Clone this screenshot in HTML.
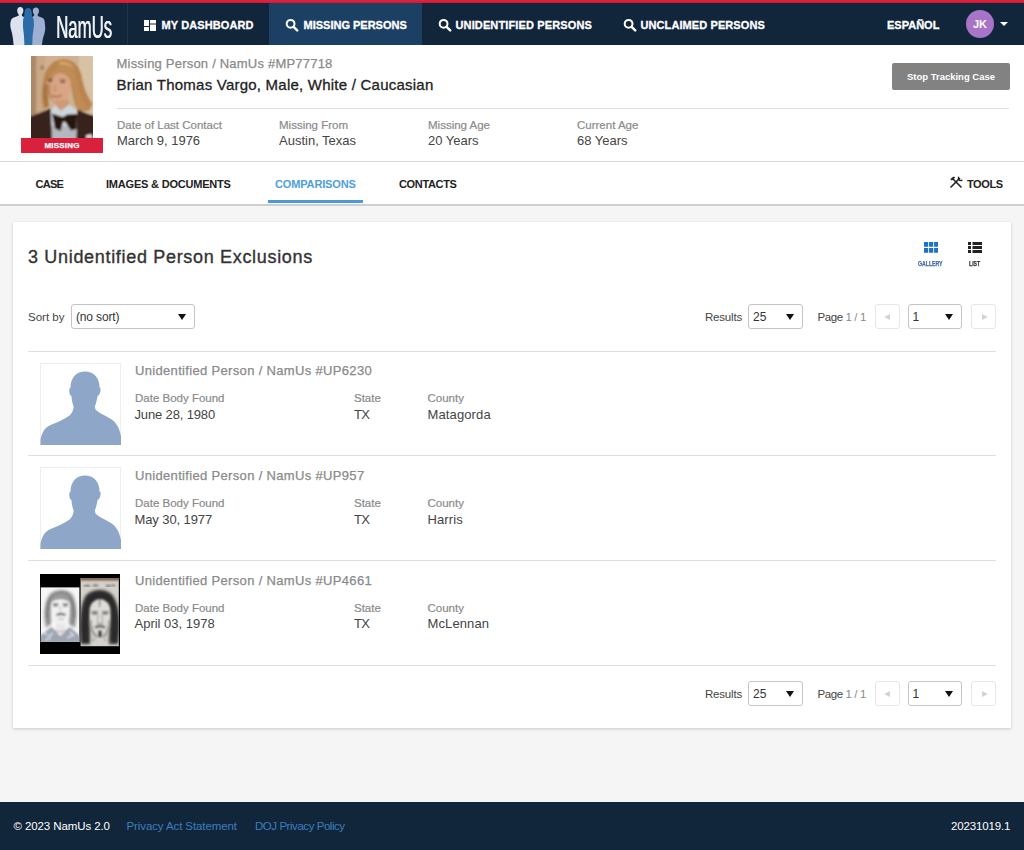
<!DOCTYPE html>
<html lang="en">
<head>
<meta charset="utf-8">
<title>NamUs - Comparisons</title>
<style>
*{box-sizing:border-box;margin:0;padding:0}
html,body{width:1024px;height:850px;overflow:hidden}
body{background:#f5f5f5;font-family:"Liberation Sans","DejaVu Sans",sans-serif;color:#333;position:relative}
.abs{position:absolute;white-space:nowrap}
#redbar{position:absolute;left:0;top:0;width:1024px;height:3px;background:#e01f3d}
#nav{position:absolute;left:0;top:3px;width:1024px;height:42px;background:#11253b;box-shadow:0 0 1px rgba(10,25,45,.6)}
#nav .sep{position:absolute;left:127px;top:0;width:1px;height:42px;background:#22344d}
#nav .active{position:absolute;left:269px;top:0;width:153px;height:42px;background:#1c3f64}
.navt{position:absolute;top:15px;font-weight:bold;font-size:11px;-webkit-text-stroke:.3px #fff;color:#fff;white-space:nowrap;line-height:14px}
#hdr{position:absolute;left:0;top:45px;width:1024px;height:117px;background:#fff;border-bottom:1px solid #d9d9d9}
#tabs{position:absolute;left:0;top:162px;width:1024px;height:44px;background:#fff;border-bottom:2px solid #cfcfcf}
.tab{position:absolute;top:15px;font-weight:bold;font-size:11px;color:#222;white-space:nowrap;line-height:14px}
#card{position:absolute;left:13px;top:222px;width:998px;height:506px;background:#fff;box-shadow:0 1px 3px rgba(0,0,0,.18)}
#footer{position:absolute;left:0;top:802px;width:1024px;height:48px;background:#11253b}
.lbl{position:absolute;font-size:11.5px;color:#8a8a8a;-webkit-text-stroke:.2px #8a8a8a;white-space:nowrap;line-height:14px}
.val{position:absolute;font-size:13px;color:#444;white-space:nowrap;line-height:16px}
.hr{position:absolute;height:1px;background:#dedede}
.sel{position:absolute;height:25px;border:1px solid #c4c4c4;border-radius:3px;background:#fff;font-size:12px;color:#333;line-height:25px;padding-left:4px;white-space:nowrap}
.sel i{position:absolute;right:8px;top:9px;width:0;height:0;border-left:4px solid transparent;border-right:4px solid transparent;border-top:6px solid #111}
.pbtn{position:absolute;width:25px;height:25px;border:1px solid #e6e6e6;border-radius:3px;background:#fff}
.pbtn i{position:absolute;top:9px;width:0;height:0;border-top:3px solid transparent;border-bottom:3px solid transparent}
.pbtn i.l{left:8px;border-right:6px solid #d4d4d4}
.pbtn i.r{left:10px;border-left:6px solid #d4d4d4}
.ttl{position:absolute;font-size:13px;color:#8a8a8a;-webkit-text-stroke:.25px #8a8a8a;white-space:nowrap;line-height:16px;left:122px;letter-spacing:.33px}
.thumb{position:absolute;overflow:hidden}
.small{position:absolute;font-size:11.5px;color:#444;line-height:14px;white-space:nowrap}
.ft{position:absolute;top:17px;font-size:11.5px;line-height:14px;white-space:nowrap}
</style>
</head>
<body>
<div id="redbar"></div>
<div id="nav">
  <div class="sep"></div>
  <div class="active"></div>
  <svg class="abs" style="left:0;top:-3px" width="56" height="48" viewBox="0 0 56 48">
    <path d="M20.3 6.9C22.3 6.9 23.5 8.5 23.4 10.6C23.3 12.6 22.6 13.8 21.9 14.6L22 16L25 17.5V45H13.6L13 39L12 33L10.6 28L10.2 24L11 20L12.6 18L16.5 16.5L18.6 15.8L18.7 14.6C17.9 13.8 17.3 12.6 17.2 10.6C17.1 8.5 18.3 6.9 20.3 6.9Z" fill="#dde3ee"/>
    <path d="M35.9 7.5C37.9 7.5 39.1 9 39 11C38.9 12.8 38.3 13.8 37.6 14.5L37.8 16L41 17.2L43.6 18.6L44.6 21L45.3 28.5L44.6 33L43.2 37.5L42.4 41L41.9 45H31V17.5L34 16L34.2 14.5C33.5 13.8 32.9 12.8 32.8 11C32.7 9 33.9 7.5 35.9 7.5Z" fill="#9db0d2"/>
    <path d="M28.1 8.1C30.3 8.1 31.6 9.8 31.8 12.2L32.2 16.5L33.6 19L34 25L33.4 30L32.6 36L32.3 45H24.4L24 36L23.3 30L22.9 25L23.2 19L24.2 16.5L24.5 12.2C24.7 9.8 25.9 8.1 28.1 8.1Z" fill="#2a6ba8"/>
  </svg>
  <div class="abs" id="logo" style="left:56px;top:6px;font-size:30.5px;line-height:36px;color:#eef1f5;transform-origin:0 0;transform:scaleX(.55);text-shadow:.7px 0 0 #eef1f5">NamUs</div>
  <svg class="abs" style="left:144px;top:17px" width="12" height="11" viewBox="0 0 12 11"><path d="M0 0h5v6H0zM6 0h6v3.5H6zM0 7h5v4H0zM6 4.5h6V11H6z" fill="#fff"/></svg>
  <div class="navt" style="left:161.5px;letter-spacing:.1px">MY DASHBOARD</div>
  <svg class="abs" style="left:285px;top:15px" width="14" height="14" viewBox="0 0 14 14"><circle cx="5.6" cy="5.8" r="3.9" fill="none" stroke="#fff" stroke-width="2"/><path d="M8.6 8.8l3.6 3.6" stroke="#fff" stroke-width="2.4" stroke-linecap="round"/></svg>
  <div class="navt" style="left:303.5px">MISSING PERSONS</div>
  <svg class="abs" style="left:437.5px;top:15px" width="14" height="14" viewBox="0 0 14 14"><circle cx="5.6" cy="5.8" r="3.9" fill="none" stroke="#fff" stroke-width="2"/><path d="M8.6 8.8l3.6 3.6" stroke="#fff" stroke-width="2.4" stroke-linecap="round"/></svg>
  <div class="navt" style="left:455.5px;letter-spacing:.13px">UNIDENTIFIED PERSONS</div>
  <svg class="abs" style="left:622.5px;top:15px" width="14" height="14" viewBox="0 0 14 14"><circle cx="5.6" cy="5.8" r="3.9" fill="none" stroke="#fff" stroke-width="2"/><path d="M8.6 8.8l3.6 3.6" stroke="#fff" stroke-width="2.4" stroke-linecap="round"/></svg>
  <div class="navt" style="left:640.5px;letter-spacing:.09px">UNCLAIMED PERSONS</div>
  <div class="navt" style="left:887px">ESPAÑOL</div>
  <div class="abs" style="left:966px;top:7px;width:28px;height:28px;border-radius:50%;background:#a874c8;color:#fff;font-weight:bold;font-size:11px;line-height:28px;text-align:center">JK</div>
  <div class="abs" style="left:1000px;top:19px;width:0;height:0;border-left:4px solid transparent;border-right:4px solid transparent;border-top:4px solid #fff"></div>
</div>
<div id="hdr">
  <svg class="abs" style="left:31px;top:11px" width="62" height="82" viewBox="0 0 62 82">
    <defs><filter id="b1" x="-10%" y="-10%" width="120%" height="120%"><feGaussianBlur stdDeviation=".9"/></filter>
    <filter id="b3" x="-20%" y="-20%" width="140%" height="140%"><feGaussianBlur stdDeviation="2"/></filter>
    <clipPath id="pc"><rect width="62" height="82"/></clipPath></defs>
    <rect width="62" height="82" fill="#cfb294"/>
    <g clip-path="url(#pc)"><g filter="url(#b1)">
      <rect x="-2" y="-2" width="7.500" height="66" fill="#ad8866"/>
      <rect x="5.500" y="-2" width="9" height="60" fill="#c9a888"/>
      <rect x="48" y="-2" width="16" height="60" fill="#d8c2a5"/>
      <ellipse cx="11" cy="11.500" rx="1.500" ry="2.500" fill="#8f765e"/>
      <path d="M13 53C10 46 10.500 34 12 26C13.500 14 20 4 31 3.200C42 2.500 48.500 10 50.500 19C52.500 30 55 38 61.500 48L58 55L48 55L44 49L40 30L18 30L17 50Z" fill="#b9844e"/>
      <path d="M16 30C16 20 22 14 28 14C35 14 40.500 20 40 30C39.500 38 36 45 31 48.500C28 50 25 49 22 46C18 42 16 36 16 30Z" fill="#d9a584"/>
      <path d="M16 30C16 36 18 42 22 46C20 40 19 34 19.500 27Z" fill="#bf8862"/>
      <path d="M23.500 14C27 9 38 8 43 15C47 21 47 32 50 40C52 45 55 50 58 53L48 54C44 46 43 36 41 28C39 22 35 18 30 17C26 17 22 20 18 27C17 20 20 16 23.500 14Z" fill="#c08c54"/>
      <path d="M28 6C34 4 41 7 44 14C40 10 34 8 28 9Z" fill="#d6a468"/>
      <path d="M12 30C12 40 13 46 15 52L18 50C16 42 16 36 17 28Z" fill="#a87440"/>
      <path d="M16.500 22.800h5.500M28.500 23.800h6" stroke="#6e4a30" stroke-width="1.100"/>
      <path d="M17.200 25h4M29.500 26.200h4.500" stroke="#3e2a20" stroke-width="1.300"/>
      <path d="M24 29L23.500 34.500L26 34.800" stroke="#b37c58" stroke-width="1" fill="none"/>
      <path d="M21 39.500C24 41 28 41 31 39" stroke="#8c4f3a" stroke-width="1.100" fill="none"/>
      <path d="M24 44H38V54L31 58L24 54Z" fill="#cf9a74"/>
      <path d="M19.500 54L24.500 49L30 55L38 48.500L46.500 54.500V84H19.500Z" fill="#cdd4dc"/>
      <path d="M20 70H46V84H20Z" fill="#b4b7bb"/>
      <path d="M-2 61L19.700 52.500L21 84H-2Z" fill="#38201a"/>
      <path d="M64 60.500L46.200 53.500L45.500 84H64Z" fill="#38201a"/>
      <path d="M21 57.500L31.500 61L33 60.500L36 58.500L46 58L45.500 73L40 74.500L34 65.500L32 66L29.500 75L24 72.500Z" fill="#26120f"/>
      <path d="M55 79.500L60 78L62 82H55Z" fill="#e8e0da"/>
    </g></g>
  </svg>
  <div class="abs" style="left:21px;top:92.5px;width:82px;height:15px;background:#d9213d;color:#fff;font-weight:bold;font-size:8px;-webkit-text-stroke:.25px #fff;line-height:15px;text-align:center;letter-spacing:.2px">MISSING</div>
  <div class="abs" style="left:116.5px;top:10.5px;font-size:13px;color:#8a8a8a;-webkit-text-stroke:.25px #8a8a8a;line-height:16px;letter-spacing:.21px">Missing Person / NamUs #MP77718</div>
  <div class="abs" style="left:116.5px;top:30px;font-size:15px;color:#222;-webkit-text-stroke:.3px #222;line-height:20px;letter-spacing:.23px">Brian Thomas Vargo, Male, White / Caucasian</div>
  <div class="hr" style="left:117px;top:63px;width:892px"></div>
  <div class="lbl" style="left:117px;top:72.5px">Date of Last Contact</div>
  <div class="val" style="left:117px;top:87.5px">March 9, 1976</div>
  <div class="lbl" style="left:279px;top:72.5px">Missing From</div>
  <div class="val" style="left:279px;top:87.5px">Austin, Texas</div>
  <div class="lbl" style="left:428px;top:72.5px">Missing Age</div>
  <div class="val" style="left:428px;top:87.5px">20 Years</div>
  <div class="lbl" style="left:577px;top:72.5px">Current Age</div>
  <div class="val" style="left:577px;top:87.5px">68 Years</div>
  <div class="abs" style="left:892px;top:18px;width:118px;height:27px;background:#828282;border-radius:2px;color:#fff;font-weight:bold;font-size:9.5px;line-height:27px;text-align:center">Stop Tracking Case</div>
</div>
<div id="tabs">
  <div class="tab" style="left:35.5px;letter-spacing:-.7px">CASE</div>
  <div class="tab" style="left:106px;letter-spacing:-.2px">IMAGES &amp; DOCUMENTS</div>
  <div class="tab" style="left:275px;color:#4d9fdc;letter-spacing:-.15px">COMPARISONS</div>
  <div class="abs" style="left:267.5px;top:38px;width:95px;height:3px;background:#4a9bd8"></div>
  <div class="tab" style="left:399px;letter-spacing:-.35px">CONTACTS</div>
  <svg class="abs" style="left:949px;top:14px" width="14" height="12" viewBox="0 0 14 12">
    <path d="M2 11L10.5 2.5" stroke="#222" stroke-width="1.6" stroke-linecap="round"/>
    <path d="M3.5 2.5L12 11" stroke="#222" stroke-width="1.6" stroke-linecap="round"/>
    <path d="M1.2 3.2L4.6 0.6L6.2 1.4L3 4.6Z" fill="#222"/>
    <path d="M9.6 0.8L9.4 3.2L11 4.6L13.4 4.2" stroke="#222" stroke-width="1.4" fill="none"/>
  </svg>
  <div class="tab" style="left:967px;letter-spacing:-.4px">TOOLS</div>
</div>
<div id="card">
  <div class="abs" style="left:15px;top:23px;font-size:18px;color:#333;-webkit-text-stroke:.35px #333;line-height:24px;letter-spacing:.68px">3 Unidentified Person Exclusions</div>
  <svg class="abs" style="left:910.700px;top:20px" width="14.300" height="11" viewBox="0 0 14.300 11"><path d="M0 0h4.200v4.800H0zM5.050 0h4.200v4.800h-4.200zM10.100 0h4.200v4.800h-4.200zM0 6h4.200v4.800H0zM5.050 6h4.200v4.800h-4.200zM10.100 6h4.200v4.800h-4.200z" fill="#1f6fc4"/></svg>
  <div class="abs" style="left:905px;top:37.500px;font-size:7px;font-weight:bold;line-height:8px;color:#4468ad;-webkit-text-stroke:.25px #4468ad;transform-origin:0 0;transform:scaleX(.74)">GALLERY</div>
  <svg class="abs" style="left:955px;top:20.400px" width="14" height="11" viewBox="0 0 14 11"><path d="M0 0h3v3H0zM4.500 0H14v3H4.500zM0 4h3v3H0zM4.500 4H14v3H4.500zM0 8h3v3H0zM4.500 8H14v3H4.500z" fill="#222"/></svg>
  <div class="abs" style="left:956px;top:37.500px;font-size:7px;font-weight:bold;line-height:8px;color:#333;-webkit-text-stroke:.25px #333;transform-origin:0 0;transform:scaleX(.74)">LIST</div>
  <div class="small" style="left:15px;top:88px">Sort by</div>
  <div class="sel" style="left:58px;top:81.500px;width:124px;padding-left:4px;letter-spacing:-.15px">(no sort)<i></i></div>
  <div class="small" style="left:692px;top:87.5px;letter-spacing:-.2px">Results</div>
  <div class="sel" style="left:735px;top:81.5px;width:55px">25<i></i></div>
  <div class="small" style="left:804.5px;top:87.5px;letter-spacing:-.4px">Page <span style="color:#8a8a8a">1 / 1</span></div>
  <div class="pbtn" style="left:862px;top:81.5px"><i class="l"></i></div>
  <div class="sel" style="left:894.5px;top:81.5px;width:54.5px">1<i></i></div>
  <div class="pbtn" style="left:957.5px;top:81.5px"><i class="r"></i></div>
  <div class="hr" style="left:15px;top:129px;width:968px"></div>
  <div class="thumb" style="left:26.5px;top:140.5px;width:81px;height:82px"><svg width="81" height="82" viewBox="0 0 81 81" preserveAspectRatio="none" style="display:block"><rect x=".5" y=".5" width="80" height="80" fill="#fff" stroke="#eee"/>
    <path d="M45 8.5C53 8.5 59.5 14 59.5 24C60.5 24 61 26 60.2 29C59.6 31 58.6 32.5 57.6 32.5C56.6 38 55.6 41 54.8 43L55.5 46C58 49 63 51 68 53.5C75 57 79 62 81 72V81H.5V76C2 68 5 64 10 61.5C16 58.5 24 56 30 51.5C32.5 49 33.5 46 33.6 43C32.4 40 31.8 36 31.4 32.5C30 32.5 29.2 30 29.2 27.5C29.2 25.5 29.8 24.5 30.5 24.5C30.5 14 37 8.5 45 8.5Z" fill="#8ea7c9"/></svg></div>
  <div class="ttl" style="top:141px">Unidentified Person / NamUs #UP6230</div>
  <div class="lbl" style="left:122px;top:169px">Date Body Found</div><div class="val" style="left:121.500px;top:185px;letter-spacing:-0.15px">June 28, 1980</div>
  <div class="lbl" style="left:341px;top:169px">State</div><div class="val" style="left:341px;top:185px;letter-spacing:-.8px">TX</div>
  <div class="lbl" style="left:414.500px;top:169px">County</div><div class="val" style="left:414.500px;top:185px;letter-spacing:.12px">Matagorda</div>
  <div class="hr" style="left:15px;top:233px;width:968px"></div>
  <div class="thumb" style="left:26.5px;top:245.25px;width:81px;height:82px"><svg width="81" height="82" viewBox="0 0 81 81" preserveAspectRatio="none" style="display:block"><rect x=".5" y=".5" width="80" height="80" fill="#fff" stroke="#eee"/>
    <path d="M45 8.5C53 8.5 59.5 14 59.5 24C60.5 24 61 26 60.2 29C59.6 31 58.6 32.5 57.6 32.5C56.6 38 55.6 41 54.8 43L55.5 46C58 49 63 51 68 53.5C75 57 79 62 81 72V81H.5V76C2 68 5 64 10 61.5C16 58.5 24 56 30 51.5C32.5 49 33.5 46 33.6 43C32.4 40 31.8 36 31.4 32.5C30 32.5 29.2 30 29.2 27.5C29.2 25.5 29.8 24.5 30.5 24.5C30.5 14 37 8.5 45 8.5Z" fill="#8ea7c9"/></svg></div>
  <div class="ttl" style="top:246px">Unidentified Person / NamUs #UP957</div>
  <div class="lbl" style="left:122px;top:274px">Date Body Found</div><div class="val" style="left:121.500px;top:290px;letter-spacing:-0.1px">May 30, 1977</div>
  <div class="lbl" style="left:341px;top:274px">State</div><div class="val" style="left:341px;top:290px;letter-spacing:-.8px">TX</div>
  <div class="lbl" style="left:414.500px;top:274px">County</div><div class="val" style="left:414.500px;top:290px;letter-spacing:.12px">Harris</div>
  <div class="hr" style="left:15px;top:338px;width:968px"></div>
  <div class="thumb" style="left:27px;top:352px;width:80px;height:80px"><svg width="80" height="80" viewBox="0 0 80 80" style="display:block">
    <defs><filter id="b2" x="-10%" y="-10%" width="120%" height="120%"><feGaussianBlur stdDeviation=".8"/></filter>
    <filter id="b4" x="-20%" y="-20%" width="140%" height="140%"><feGaussianBlur stdDeviation="1.600"/></filter>
    <clipPath id="c1"><rect x=".800" y="13.400" width="38.600" height="54.600"/></clipPath><clipPath id="c2"><rect x="40.600" y="4" width="38.200" height="68.200"/></clipPath></defs>
    <rect width="80" height="80" fill="#000"/>
    <rect x=".800" y="13.400" width="38.600" height="54.600" fill="#f6f6f6"/>
    <g clip-path="url(#c1)">
      <g filter="url(#b4)"><path d="M6 54C3 42 4 27 10 20C16 14.500 27 14.500 32 20C37 27 37.500 42 35 54L29 50L29 28L12 28L11 50Z" fill="#9a9a9a"/></g>
      <g filter="url(#b2)">
      <path d="M9 50C6 40 8 26 13 21M32 50C35 40 33 27 28 21M12 22C16 18 24 17 29 21M7 44C6 36 8 28 11 23M34 44C35 36 33 28 30 23" stroke="#6a6a6a" stroke-width=".800" fill="none"/>
      <path d="M11.500 30C12 23.500 28.500 23.500 29.500 30L29 42L25 50.500H16.500L12 42Z" fill="#f0f0f0"/>
      <path d="M12.500 29.800h6M22.500 29.800h6" stroke="#666" stroke-width="1"/>
      <path d="M13.500 31.500h4.500M23 31.500h4.500" stroke="#333" stroke-width="1.300"/>
      <path d="M20.500 32v6.500" stroke="#bbb" stroke-width="1"/>
      <path d="M16.500 41C19 39.800 23 39.800 25.500 41" stroke="#444" stroke-width="1.900" fill="none"/>
      <path d="M18 45h6" stroke="#999" stroke-width=".800"/>
      <path d="M0 62L11 53L15 56L20 62L26 56L30 53L40 62V69H0Z" fill="#9ea5b3"/>
      <path d="M3 58l4 3M8 63l5-4M30 58l4 4M27 64l6-3M5 66l6-2" stroke="#e8e8ee" stroke-width="1.200"/>
      <path d="M16 50h9.500v7l-4.700 5l-4.800 -5Z" fill="#e6e6e6"/>
      <path d="M15 57.500h11.500" stroke="#777" stroke-width=".900" stroke-dasharray="1.500 1"/>
      </g>
    </g>
    <rect x="40.600" y="4" width="38.200" height="68.200" fill="#d4d1cb"/>
    <g clip-path="url(#c2)">
      <g filter="url(#b2)"><rect x="40" y="3" width="40" height="3.500" fill="#7a5a44"/>
      <path d="M44 12h6M53 11.500h5M66 12h5M72 11.500h3" stroke="#555" stroke-width="1.600"/></g>
      <g filter="url(#b4)"><path d="M41 70C39 52 40 32 45 23C51 14 67 14 73 22C80 32 81 52 78 70L69 70L70 40L50 40L50 70Z" fill="#2b2b2b"/></g>
      <g filter="url(#b2)">
      <path d="M49.500 36C50 27 58 25 59.800 25C62 25 70 27 70.500 36L69.500 52L63 63H57L50.500 52Z" fill="#dedcd8"/>
      <path d="M59.800 25L59.500 33" stroke="#444" stroke-width="1"/>
      <path d="M50.500 46C50 52 53 60 57 63M69.500 46C70 52 67 60 63 63" stroke="#8a8a8a" stroke-width="2" fill="none"/>
      <path d="M51.500 37.500h6.500M62 37.500h6.500" stroke="#555" stroke-width="1"/>
      <path d="M52 39.500h5.500M62.500 39.500h5.500" stroke="#1e1e1e" stroke-width="1.600"/>
      <path d="M58 41L57.500 48.500M62 41L62.500 48.500" stroke="#999" stroke-width="1"/>
      <path d="M57 49.500h6" stroke="#666" stroke-width="1"/>
      <path d="M55 53.500C58 52 62 52 65 53.500" stroke="#2a2a2a" stroke-width="2.200" fill="none"/>
      <path d="M58 56.500h4v6.500h-4Z" fill="#3a3a3a"/>
      <path d="M52 66h3M64 66h2M70 68h2" stroke="#777" stroke-width="1"/>
      </g>
    </g>
  </svg></div>
  <div class="ttl" style="top:351px">Unidentified Person / NamUs #UP4661</div>
  <div class="lbl" style="left:122px;top:379px">Date Body Found</div><div class="val" style="left:121.500px;top:394px;letter-spacing:0px">April 03, 1978</div>
  <div class="lbl" style="left:341px;top:379px">State</div><div class="val" style="left:341px;top:394px;letter-spacing:-.8px">TX</div>
  <div class="lbl" style="left:414.500px;top:379px">County</div><div class="val" style="left:414.500px;top:394px;letter-spacing:.12px">McLennan</div>
  <div class="hr" style="left:15px;top:443px;width:968px"></div>
  <div class="small" style="left:692px;top:465px;letter-spacing:-.2px">Results</div>
  <div class="sel" style="left:735px;top:459px;width:55px">25<i></i></div>
  <div class="small" style="left:804.5px;top:465px;letter-spacing:-.4px">Page <span style="color:#8a8a8a">1 / 1</span></div>
  <div class="pbtn" style="left:862px;top:459px"><i class="l"></i></div>
  <div class="sel" style="left:894.5px;top:459px;width:54.5px">1<i></i></div>
  <div class="pbtn" style="left:957.5px;top:459px"><i class="r"></i></div>
</div>
<div id="footer">
  <div class="ft" style="left:13.500px;color:#fff;letter-spacing:-.1px">© 2023 NamUs 2.0</div>
  <div class="ft" style="left:126.500px;color:#3b7fbe;letter-spacing:-.1px">Privacy Act Statement</div>
  <div class="ft" style="left:255px;color:#3b7fbe;letter-spacing:-.45px">DOJ Privacy Policy</div>
  <div class="ft" style="left:951px;color:#fff;letter-spacing:-.15px">20231019.1</div>
</div>
</body>
</html>
